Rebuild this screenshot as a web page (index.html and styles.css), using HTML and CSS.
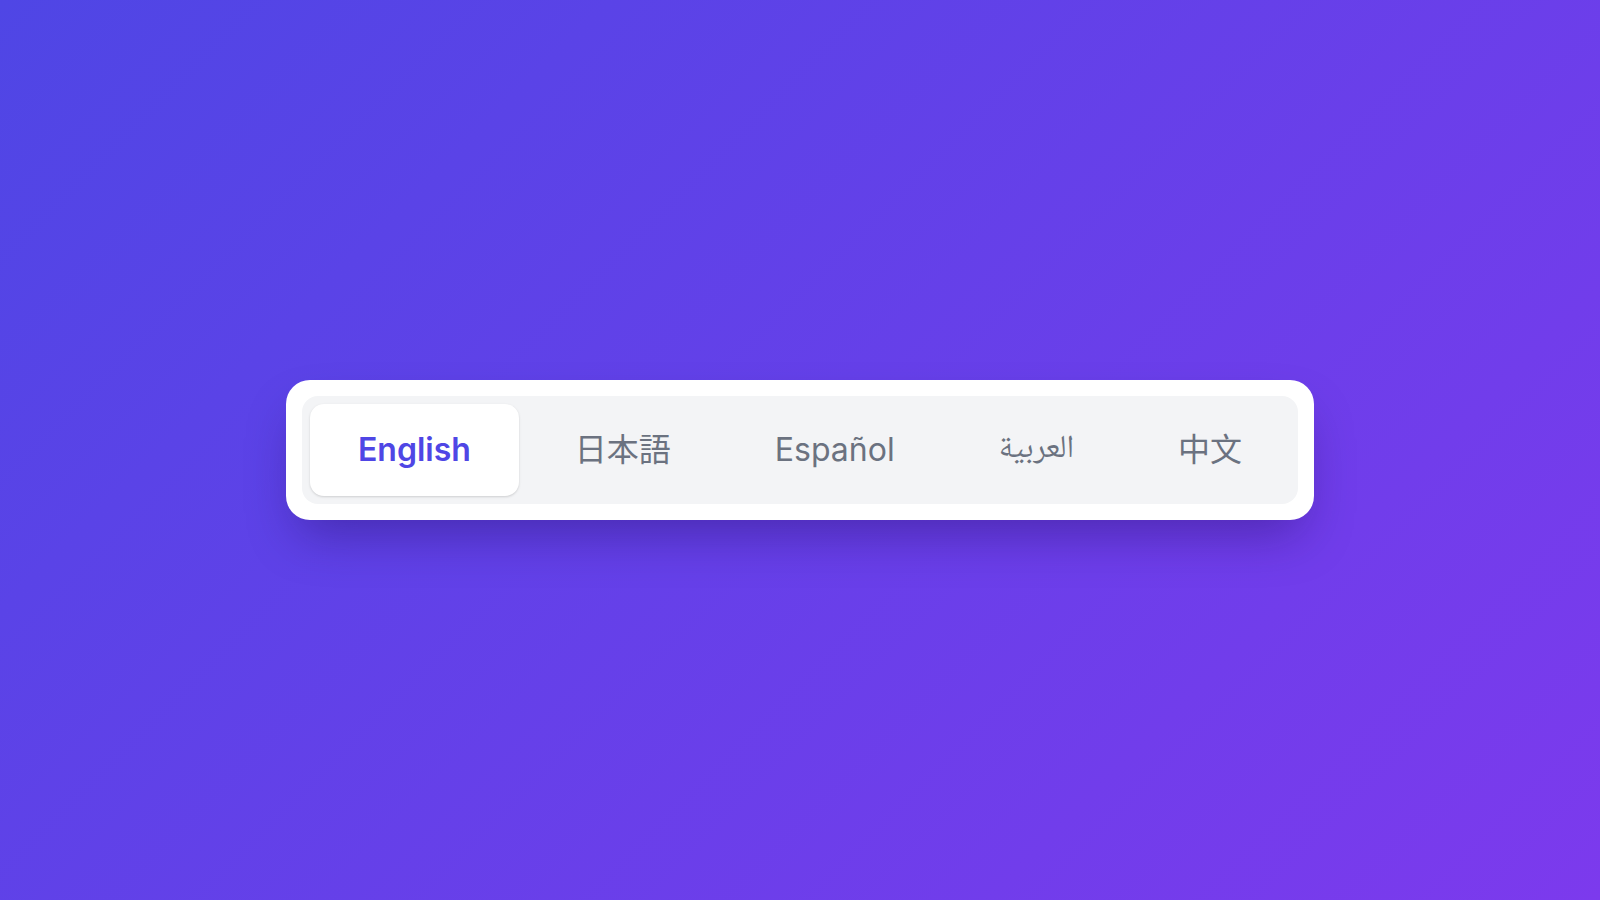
FILE: index.html
```html
<!DOCTYPE html>
<html lang="en">
<head>
<meta charset="utf-8">
<title>Language switcher</title>
<link rel="stylesheet" href="styles.css">
</head>
<body>
<main class="stage">
  <div class="card">
    <nav class="tabs">
      <button class="tab tab-active">English</button>
      <button class="tab" lang="ja">日本語</button>
      <button class="tab">Español</button>
      <button class="tab tab-ar" lang="ar">العربية</button>
      <button class="tab" lang="zh">中文</button>
    </nav>
  </div>
</main>
</body>
</html>
```
FILE: styles.css
```css
html, body {
  margin: 0;
  height: 100%;
}
body {
  font-family: Inter, "Noto Sans CJK JP", "Noto Naskh Arabic", sans-serif;
}
.stage {
  height: 100vh;
  display: flex;
  align-items: center;
  justify-content: center;
  background: linear-gradient(135deg, #4f46e5 0%, #7c3aed 100%);
}
.card {
  background: #ffffff;
  border-radius: 24px;
  padding: 16px;
  box-shadow: 0 25px 50px -12px rgba(30, 10, 90, 0.4);
}
.tabs {
  display: flex;
  gap: 8px;
  padding: 8px;
  background: #f3f4f6;
  border-radius: 16px;
}
.tab {
  font-family: Inter, "Noto Sans CJK JP", "Noto Naskh Arabic", sans-serif;
  font-size: 32px;
  line-height: 44px;
  font-weight: 400;
  color: #6b7280;
  background: transparent;
  border: 0;
  border-radius: 14px;
  padding: 24px 48px;
  margin: 0;
  cursor: pointer;
}
.tab-ar {
  font-family: "Noto Naskh Arabic", serif;
}
.tab-active {
  background: #ffffff;
  color: #4f46e5;
  font-weight: 600;
  box-shadow: 0 1px 3px rgba(0, 0, 0, 0.1), 0 1px 2px rgba(0, 0, 0, 0.06);
}
```
